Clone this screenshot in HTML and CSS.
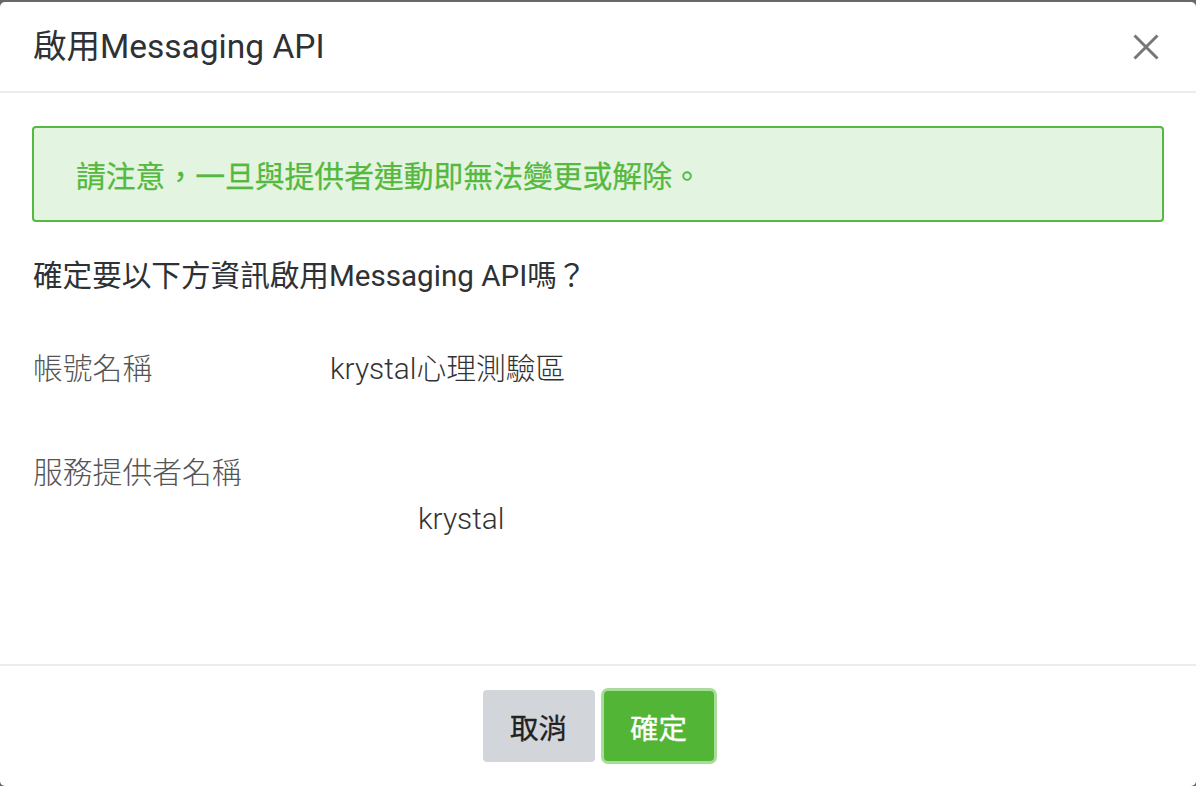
FILE: index.html
```html
<!DOCTYPE html>
<html lang="zh-Hant">
<head>
<meta charset="utf-8">
<title>啟用Messaging API</title>
<link rel="stylesheet" href="styles.css">
</head>
<body>
<div class="modal">
  <div class="modal-header">
    <h1 class="modal-title">啟用Messaging API</h1>
    <button class="close" aria-label="close">
      <svg width="26" height="26" viewBox="0 0 26 26"><path d="M1.5 1.5 L24.5 24.5 M24.5 1.5 L1.5 24.5" stroke="#777" stroke-width="3" fill="none"/></svg>
    </button>
  </div>
  <div class="modal-body">
    <div class="alert">請注意，一旦與提供者連動即無法變更或解除。</div>
    <p class="question">確定要以下方資訊啟用Messaging API嗎？</p>
    <div class="row">
      <div class="label">帳號名稱</div>
      <div class="value">krystal心理測驗區</div>
    </div>
    <div class="row row-wrap">
      <div class="label">服務提供者名稱</div>
      <div class="value value-below">krystal</div>
    </div>
  </div>
  <div class="modal-footer">
    <button class="btn btn-cancel">取消</button>
    <button class="btn btn-ok">確定</button>
  </div>
</div>
</body>
</html>
```
FILE: styles.css
```css
html, body {
  margin: 0;
  padding: 0;
}
body {
  background: #686868;
  font-family: Roboto, "Noto Sans CJK TC", sans-serif;
  color: #333;
  width: 1196px;
  height: 786px;
  overflow: hidden;
}
.modal {
  margin-top: 2px;
  height: 784px;
  background: #fff;
  border-radius: 5px;
  display: flex;
  flex-direction: column;
}
.modal-header {
  height: 89px;
  border-bottom: 2px solid #ececec;
  padding: 0 37px 0 33px;
  display: flex;
  align-items: center;
  justify-content: space-between;
}
.modal-title {
  margin: 0;
  font-size: 33.5px;
  font-weight: 400;
  color: #2e3135;
  line-height: 1;
}
.close {
  border: 0;
  background: none;
  padding: 0;
  width: 26px;
  height: 26px;
  display: flex;
}
.modal-body {
  flex: 1;
  padding: 33px 32px 0 32px;
}
.alert {
  height: 92px;
  border: 2px solid #55b83f;
  background: #e3f4e0;
  border-radius: 4px;
  display: flex;
  align-items: center;
  padding-left: 42px;
  font-size: 29.8px;
  font-weight: 400;
  -webkit-text-stroke: 0.25px #55b83f;
  color: #55b83f;
}
.question {
  margin: 30px 0 0 1px;
  font-size: 29.6px;
  font-weight: 400;
  line-height: 48px;
  color: #2e3135;
}
.row {
  display: flex;
  flex-wrap: wrap;
  margin-left: 1px;
  font-size: 29.8px;
  font-weight: 300;
  line-height: 46px;
  margin-top: 46px;
}
.row-wrap {
  margin-top: 58px;
}
.label {
  width: 297px;
  color: #555;
}
.value {
  color: #333;
}
.value-below {
  width: 100%;
  padding-left: 385px;
}
.modal-footer {
  height: 120px;
  border-top: 2px solid #ececec;
  display: flex;
  align-items: center;
  justify-content: center;
  gap: 9px;
}
.btn {
  border: 0;
  border-radius: 4px;
  font-family: Roboto, "Noto Sans CJK TC", sans-serif;
  font-size: 28.5px;
  font-weight: 400;
  height: 72px;
  padding: 0;
}
.btn-cancel {
  width: 112px;
  background: #d2d5d9;
  color: #222;
  -webkit-text-stroke: 0.3px #222;
}
.btn-ok {
  width: 110px;
  height: 70px;
  background: #52b535;
  color: #fff;
  -webkit-text-stroke: 0.3px #fff;
  box-shadow: 0 0 0 3px #a8dc9b;
}
```
